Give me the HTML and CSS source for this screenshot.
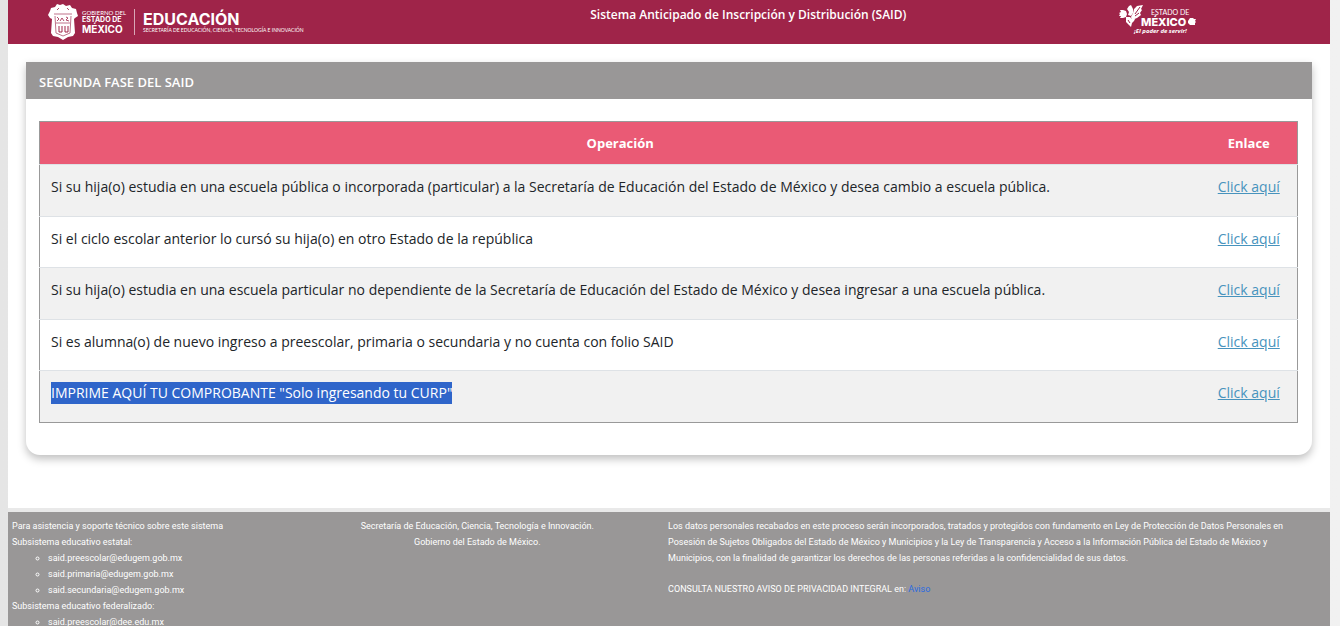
FILE: index.html
```
<!DOCTYPE html>
<html lang="es">

<head>
    <meta charset="UTF-8">
    <meta name="viewport" content="width=device-width, initial-scale=1.0">
    <title>SAID</title>
    <link rel="stylesheet" href="styles.css">
</head>

<body>
    <div class="page">
        <header class="header">
            <div class="brand">
                <svg class="escudo" viewBox="0 0 30 36" aria-hidden="true">
                    <path fill="#fff" d="M15 0l3 2 4-1 2 3 4 1 1 4 1 3-3 2-1 1 1 14-2 3-5 1-5 3-5-3-5-1-2-3 1-14-2-1-2-3 2-4 1-3 4-1 2-3 3 1z" />
                    <path fill="none" stroke="#c0738b" d="M6 10h18M7 12l1 17 7 3 7-3 1-17M8 19h14" />
                    <path fill="none" stroke="#9f2449" d="M11 22v6M14 22v6M17 22v6M20 22v6M11 28h3M17 28h3" />
                    <path fill="none" stroke="#b04b6a" d="M9 13l2 2-2 2M12 17l2-3 2 3M18 13l2 1-2 2 3 1M9 6l2-2M19 4l2 2" />
                </svg>
                <div class="brand-state">
                    <span class="tiny">GOBIERNO DEL</span>
                    <span class="small">ESTADO DE</span>
                    <span class="big">MÉXICO</span>
                </div>
                <div class="brand-dept">
                    <span class="dept">EDUCACIÓN</span>
                    <span class="dept-sub">SECRETARÍA DE EDUCACIÓN, CIENCIA, TECNOLOGÍA E INNOVACIÓN</span>
                </div>
            </div>
            <h1 class="header-title">Sistema Anticipado de Inscripción y Distribución (SAID)</h1>
            <div class="slogan">
                <svg class="slogan-logo" viewBox="0 0 78 32" role="img" aria-label="Estado de México">
                    <g fill="#fff">
                        <path d="M1 6l3 0 3 1 1 3-1 3-3 1-3 0 1-2-2 0 1-2-1-1 2-1z" />
                        <path d="M8 5l2-3 2-1 2 4 0 4-2 3-3-1 1-3z" />
                        <path d="M15 5l3-3 6-1-2 4 1 1-2 3 1 2-4 3-5 2-1-3 2-4z" />
                        <path d="M7 13l4 0 2 2 3 0-1 2-2 2-1 4-2-2-3-3z" />
                        <path d="M69 17l2-3 3 0 1 1 2 0-1 2 1 1-1 1 0 2-5 0-2-2z" />
                    </g>
                    <path fill="none" stroke="#9f2449" d="M21 3l-5 7M20 9l-4 3M9 16l2 3" />
                    <text class="logo-estado" x="32" y="11">ESTADO DE</text>
                    <text class="logo-mexico" x="22" y="22">MÉXICO</text>
                    <text class="logo-lema" x="15" y="29">¡El poder de servir!</text>
                </svg>
            </div>
        </header>

        <main class="content">
            <section class="card">
                <h2 class="card-header">SEGUNDA FASE DEL SAID</h2>
                <div class="card-body">
                    <table class="table">
                        <thead>
                            <tr>
                                <th>Operación</th>
                                <th class="enlace">Enlace</th>
                            </tr>
                        </thead>
                        <tbody>
                            <tr>
                                <td>Si su hija(o) estudia en una escuela pública o incorporada (particular) a la Secretaría de Educación del Estado de México y desea cambio a escuela pública.</td>
                                <td class="enlace"><a href="#">Click aquí</a></td>
                            </tr>
                            <tr>
                                <td>Si el ciclo escolar anterior lo cursó su hija(o) en otro Estado de la república</td>
                                <td class="enlace"><a href="#">Click aquí</a></td>
                            </tr>
                            <tr>
                                <td>Si su hija(o) estudia en una escuela particular no dependiente de la Secretaría de Educación del Estado de México y desea ingresar a una escuela pública.</td>
                                <td class="enlace"><a href="#">Click aquí</a></td>
                            </tr>
                            <tr>
                                <td>Si es alumna(o) de nuevo ingreso a preescolar, primaria o secundaria y no cuenta con folio SAID</td>
                                <td class="enlace"><a href="#">Click aquí</a></td>
                            </tr>
                            <tr>
                                <td><span class="selected">IMPRIME AQUÍ TU COMPROBANTE "Solo ingresando tu CURP"</span></td>
                                <td class="enlace"><a href="#">Click aquí</a></td>
                            </tr>
                        </tbody>
                    </table>
                </div>
            </section>
        </main>

        <footer class="footer">
            <div class="soporte">
                <p>Para asistencia y soporte técnico sobre este sistema</p>
                <p>Subsistema educativo estatal:</p>
                <ul>
                    <li>said.preescolar@edugem.gob.mx</li>
                    <li>said.primaria@edugem.gob.mx</li>
                    <li>said.secundaria@edugem.gob.mx</li>
                </ul>
                <p>Subsistema educativo federalizado:</p>
                <ul>
                    <li>said.preescolar@dee.edu.mx</li>
                </ul>
            </div>
            <div class="secretaria">
                <p>Secretaría de Educación, Ciencia, Tecnología e Innovación.</p>
                <p>Gobierno del Estado de México.</p>
            </div>
            <div class="privacidad">
                <p>Los datos personales recabados en este proceso serán incorporados, tratados y protegidos con fundamento en Ley de Protección de Datos Personales en Posesión de Sujetos Obligados del Estado de México y Municipios y la Ley de Transparencia y Acceso a la Información Pública del Estado de México y Municipios, con la finalidad de garantizar los derechos de las personas referidas a la confidencialidad de sus datos.</p>
                <p class="aviso">CONSULTA NUESTRO AVISO DE PRIVACIDAD INTEGRAL en: <a href="#">Aviso</a></p>
            </div>
        </footer>
    </div>
</body>

</html>
```
FILE: styles.css
```
* {
    margin: 0;
    padding: 0;
    box-sizing: border-box;
}

html {
    height: 100%;
    overflow: hidden;
}

body {
    padding: 0 10px 0 8px;
    background: linear-gradient(to right, #e5e5e5, #f1f1f1);
    font-family: "Open Sans", "Noto Sans", sans-serif;
    font-size: 14px;
    color: #212529;
}

.page {
    background: #fff;
}

/* header */
.header {
    display: grid;
    grid-template-columns: 38% 36% 26%;
    height: 44px;
    background: #9f2449;
    color: #fff;
    text-align: center;
}

.brand {
    display: flex;
    align-items: center;
    padding-left: 40px;
    font-family: Inter, sans-serif;
    font-weight: 700;
    text-align: left;
}

.brand span {
    display: block;
    white-space: nowrap;
}

.escudo {
    width: 30px;
    height: 36px;
    margin-right: 4px;
}

.brand-state {
    padding-right: 8px;
    border-right: 1px solid #d9a7b6;
}

.brand .tiny {
    font-family: Lato, sans-serif;
    font-size: 6px;
    font-weight: 400;
    line-height: 7px;
}

.small {
    font-size: 7px;
    line-height: 8px;
}

.big {
    font-size: 10px;
    line-height: 11px;
}

.brand-dept {
    padding-left: 8px;
}

.dept {
    font-size: 16px;
    line-height: 16px;
}

.brand .dept-sub {
    font-family: Lato, sans-serif;
    font-size: 5px;
    font-weight: 400;
    line-height: 6px;
}

.header-title {
    padding-top: 6px;
    font-size: 12px;
    font-weight: 600;
    line-height: 18px;
}

.slogan {
    padding-top: 4px;
}

.slogan-logo {
    width: 78px;
    height: 32px;
}

.slogan-logo text {
    fill: #fff;
    font-family: Inter, sans-serif;
}

.slogan-logo .logo-estado {
    font-family: Lato, sans-serif;
    font-size: 7px;
}

.slogan-logo .logo-mexico {
    font-size: 11px;
    font-weight: 800;
}

.slogan-logo .logo-lema {
    font-family: "Open Sans", sans-serif;
    font-size: 6px;
    font-style: italic;
    font-weight: 700;
}

/* card */
.content {
    padding: 18px 18px 53px;
}

.card {
    border-radius: 0 0 14px 14px;
    box-shadow: 0 4px 8px rgba(0, 0, 0, 0.25);
}

.card-header {
    padding: 11px 13px 8px;
    background: #999797;
    color: #fff;
    font-size: 13px;
    font-weight: 600;
    line-height: 18px;
}

.card-body {
    padding: 22px 14px 32px 13px;
}

.table {
    width: 100%;
    border: 1px solid #999;
    border-collapse: collapse;
}

.table th {
    padding: 11px 11px 10px;
    background: #ea5a75;
    color: #fff;
    font-size: 13px;
    font-weight: 700;
    line-height: 21px;
}

.table td {
    padding: 11px 11px 17px;
    border-top: 1px solid #dee2e6;
    line-height: 22px;
}

.table tbody tr:nth-child(odd) {
    background: #f1f1f1;
}

.table tbody tr:nth-child(odd) td {
    padding-bottom: 18px;
}

.table .enlace {
    width: 97px;
    text-align: center;
    white-space: nowrap;
}

.table a {
    color: #4793bd;
}

.selected {
    display: inline-block;
    background: #2f65ca;
    color: #fff;
    vertical-align: top;
}

/* footer */
.footer {
    display: grid;
    grid-template-columns: 25% 21% 1fr;
    padding: 6px 0;
    border-top: 4px solid #e9e9e9;
    background: #999797;
    background-clip: padding-box;
    color: #fff;
    font-family: Roboto, sans-serif;
    font-size: 9px;
    line-height: 16px;
}

.soporte {
    padding-left: 4px;
}

.soporte ul {
    padding-left: 36px;
    list-style: circle;
}

.secretaria {
    text-align: center;
    white-space: nowrap;
}

.privacidad {
    padding: 0 36px 0 52px;
}

.aviso {
    margin-top: 15px;
}

.footer a {
    color: #2b6be0;
    text-decoration: none;
}
```
